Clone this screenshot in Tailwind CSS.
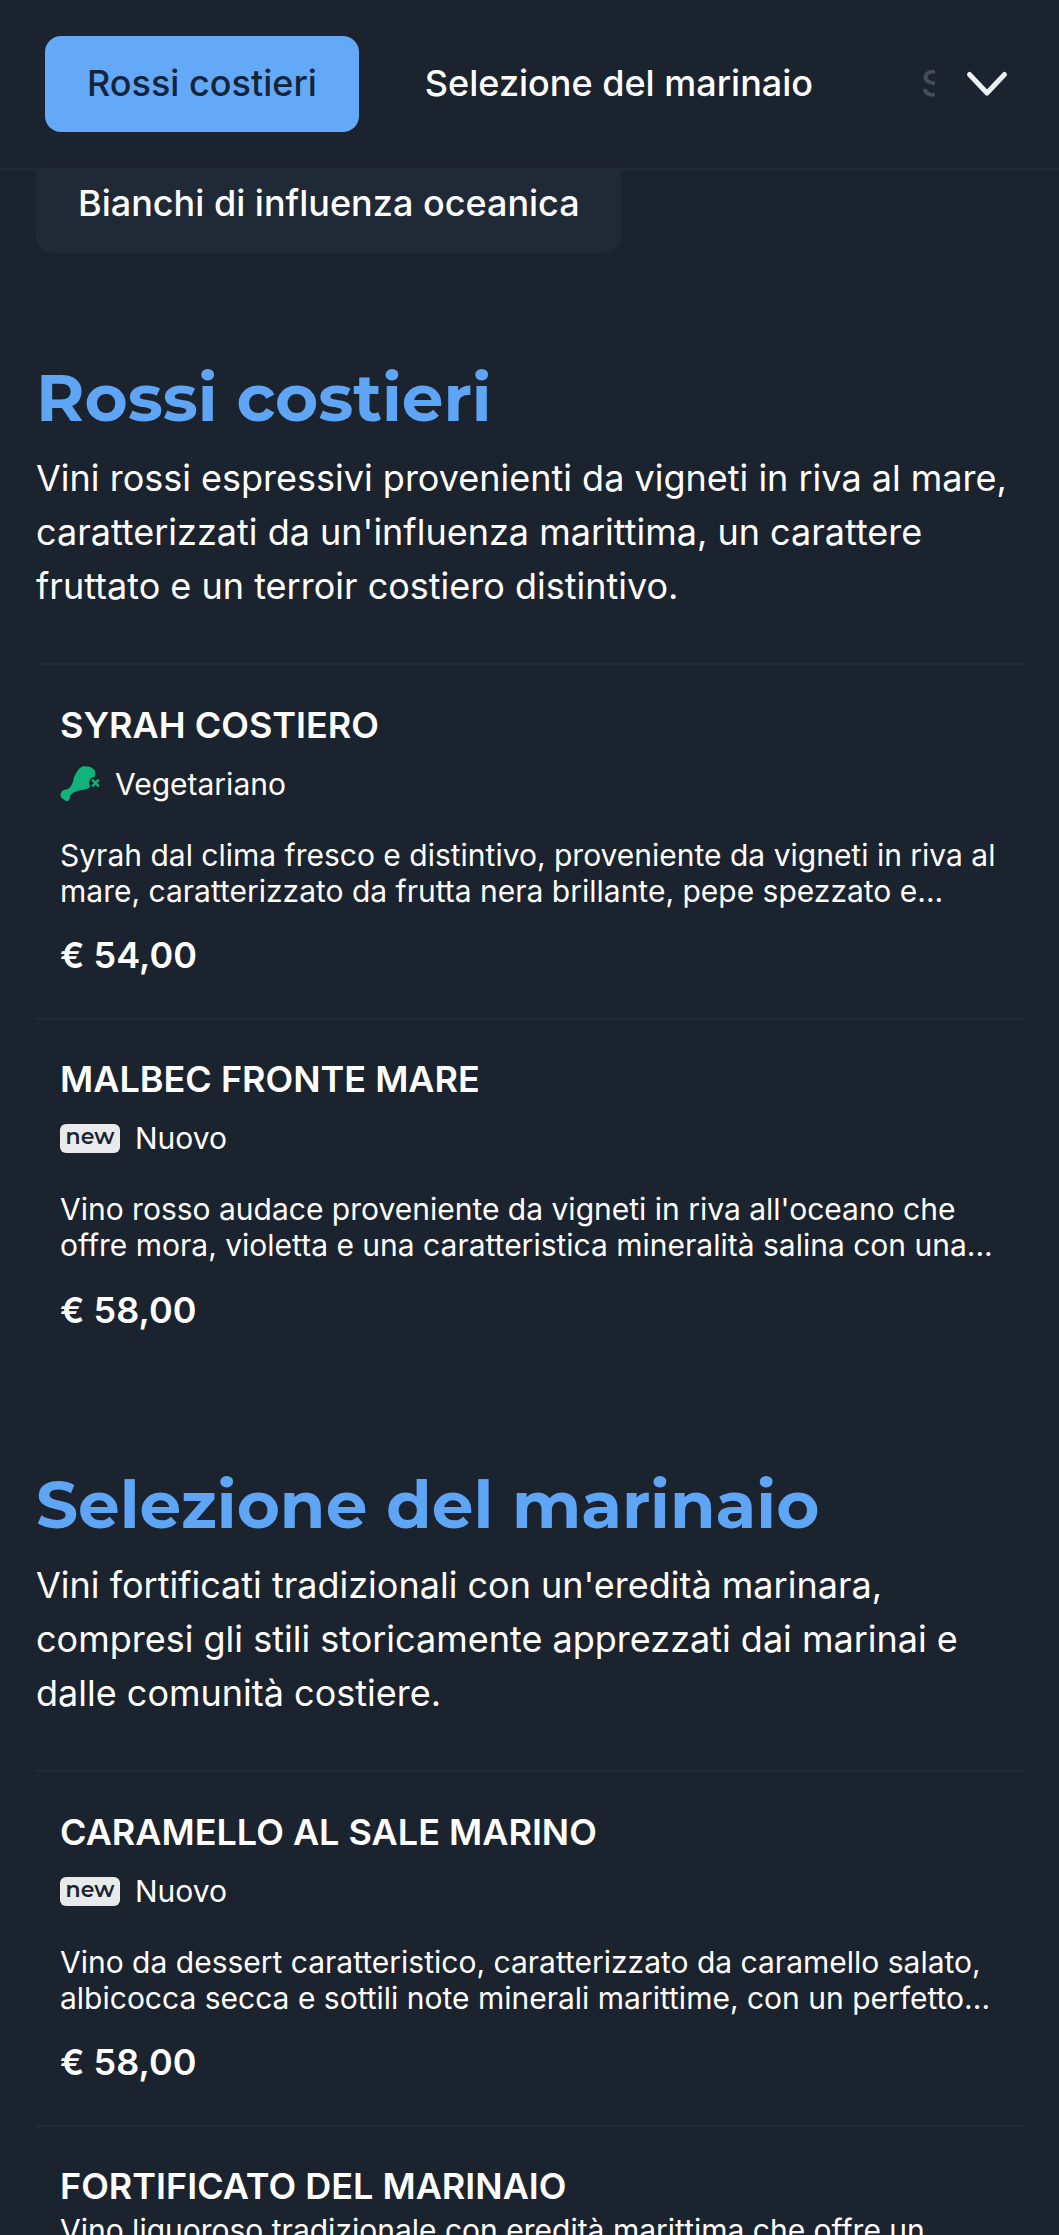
<!DOCTYPE html>
<html lang="it"><head><meta charset="utf-8"><title>Menu</title>
<script src="https://cdn.jsdelivr.net/npm/@tailwindcss/browser@4"></script></head>
<body class="bg-[#1b232e] m-0">
<div class="w-[1059px] h-[2235px] overflow-hidden bg-[#1b232e] text-white font-['Inter','Liberation_Sans',sans-serif]">
<header class="h-[170px] border-b-2 border-[#212b35] flex items-start relative">
  <nav class="ml-[45px] mt-[36px] w-[890px] overflow-hidden flex items-center gap-[24px] text-[36px] font-medium whitespace-nowrap">
    <span class="shrink-0 px-[42px] pb-[2px] h-[96px] rounded-[16px] bg-[#64a9f8] text-[#14243a] flex items-center justify-center">Rossi costieri</span>
    <span class="shrink-0 px-[42px] pb-[2px]">Selezione del marinaio</span>
    <span class="shrink-0 pl-[42px] pb-[2px] text-white/20">S</span>
  </nav>
  <svg class="absolute left-[964px] top-[69px] w-[46px] h-[30px]" viewBox="0 0 46 30" fill="none" stroke="#eef0f2" stroke-width="5" stroke-linecap="round" stroke-linejoin="round"><path d="M5.5 5.5 L23 24 L40.5 5.5"/></svg>
</header>
<div class="ml-[36px] w-[585px] h-[83px] rounded-b-[16px] bg-[#1f2a36] flex items-center pb-[18px] pl-[42px] text-[36px] font-medium whitespace-nowrap">Bianchi di influenza oceanica</div>

<section class="mt-[109px] px-[36px]">
  <h2 class="text-[66px] leading-[72px] font-bold text-[#5fa5f5] font-['Montserrat','Noto_Sans',sans-serif]">Rossi costieri</h2>
  <p class="mt-[17px] text-[36px] leading-[54px]">Vini rossi espressivi provenienti da vigneti in riva al mare, caratterizzati da un'influenza marittima, un carattere fruttato e un terroir costiero distintivo.</p>
  <div class="mt-[50px]">
    <article class="border-t-2 border-[#212d36] h-[355px] pl-[24px] pt-[38px]">
      <h3 class="text-[36px] leading-[44px] font-semibold">SYRAH COSTIERO</h3>
      <div class="mt-[19px] h-[36px] flex items-center gap-[15px] text-[30px]">
        <svg class="w-[40px] h-[38px]" viewBox="0 0 40 38"><path fill="#10b37a" d="M23.3 1.3C28 1 32 2 34.3 4.7 35.5 7 35.5 10 35 12.3 34 17 32 21 28.3 23.3 25 25 21 25 18.3 25.7 15 26.5 12 28 10 30.7 10.5 33 9.5 35 8.3 35.7 6.5 36.5 4.5 35.5 3.3 34 1.5 33.5 0 31 .7 29 1.5 26.5 3 25 5 24.7 7 24.5 9 24 10 22.3 12 20 12.5 18 13.3 15.7 14 12 15 9.5 16.7 7.3 18 4.5 20.5 1.8 23.3 1.3z"/><circle cx="35.5" cy="18" r="6.5" fill="#1b232e"/><path stroke="#10b37a" stroke-width="2.4" d="M32.2 14.7l6.6 6.6M38.8 14.7l-6.6 6.6" fill="none"/></svg>
        <span>Vegetariano</span>
      </div>
      <p class="mt-[35px] text-[30px] leading-[36px] w-[960px]">Syrah dal clima fresco e distintivo, proveniente da vigneti in riva al mare, caratterizzato da frutta nera brillante, pepe spezzato e...</p>
      <p class="mt-[24px] text-[36px] leading-[44px] font-semibold">€ 54,00</p>
    </article>
    <article class="border-t-2 border-[#212d36] pl-[24px] pt-[37px]">
      <h3 class="text-[36px] leading-[44px] font-semibold">MALBEC FRONTE MARE</h3>
      <div class="mt-[19px] h-[36px] flex items-center gap-[15px] text-[30px]">
        <span class="w-[60px] h-[29px] rounded-[6px] bg-[#e8eaec] text-[#1b232e] text-[22px] font-semibold leading-[26px] text-center font-['Montserrat','Noto_Sans',sans-serif]">new</span>
        <span>Nuovo</span>
      </div>
      <p class="mt-[35px] text-[30px] leading-[36px] w-[960px]">Vino rosso audace proveniente da vigneti in riva all'oceano che offre mora, violetta e una caratteristica mineralità salina con una...</p>
      <p class="mt-[25px] text-[36px] leading-[44px] font-semibold">€ 58,00</p>
    </article>
  </div>
</section>

<section class="mt-[137px] px-[36px]">
  <h2 class="text-[66px] leading-[72px] font-bold text-[#5fa5f5] font-['Montserrat','Noto_Sans',sans-serif]">Selezione del marinaio</h2>
  <p class="mt-[17px] text-[36px] leading-[54px]">Vini fortificati tradizionali con un'eredità marinara, compresi gli stili storicamente apprezzati dai marinai e dalle comunità costiere.</p>
  <div class="mt-[50px]">
    <article class="border-t-2 border-[#212d36] h-[355px] pl-[24px] pt-[38px]">
      <h3 class="text-[36px] leading-[44px] font-semibold">CARAMELLO AL SALE MARINO</h3>
      <div class="mt-[19px] h-[36px] flex items-center gap-[15px] text-[30px]">
        <span class="w-[60px] h-[29px] rounded-[6px] bg-[#e8eaec] text-[#1b232e] text-[22px] font-semibold leading-[26px] text-center font-['Montserrat','Noto_Sans',sans-serif]">new</span>
        <span>Nuovo</span>
      </div>
      <p class="mt-[35px] text-[30px] leading-[36px] w-[960px]">Vino da dessert caratteristico, caratterizzato da caramello salato, albicocca secca e sottili note minerali marittime, con un perfetto...</p>
      <p class="mt-[24px] text-[36px] leading-[44px] font-semibold">€ 58,00</p>
    </article>
    <article class="border-t-2 border-[#212d36] pl-[24px] pt-[37px]">
      <h3 class="text-[36px] leading-[44px] font-semibold">FORTIFICATO DEL MARINAIO</h3>
      <p class="mt-[4px] text-[30px] leading-[36px] w-[960px]">Vino liquoroso tradizionale con eredità marittima che offre un</p>
    </article>
  </div>
</section>
</div>
</body></html>
